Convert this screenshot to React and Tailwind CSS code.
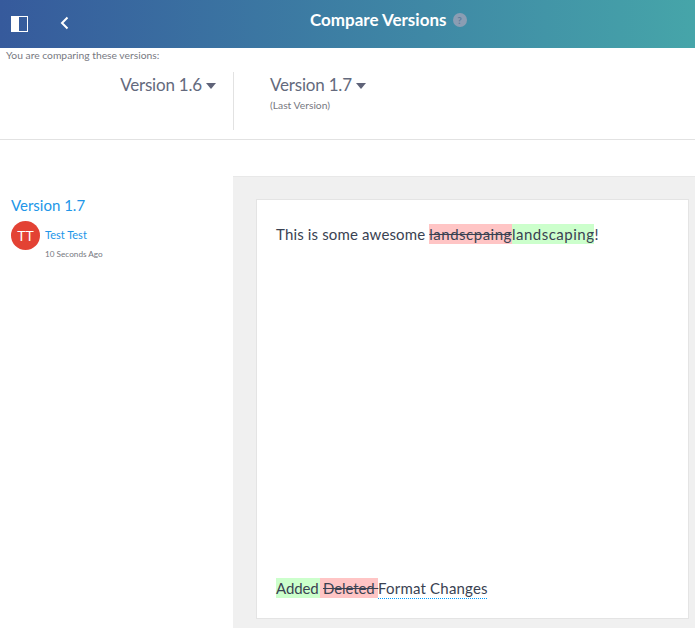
const font = { fontFamily: '"Lato", "Noto Sans", sans-serif' };

function Caret() {
  return <span className="ml-[4px] mt-[1px] inline-block h-0 w-0 border-x-[5.5px] border-t-[6px] border-x-transparent border-t-[#5f6378]" />;
}

export default function App() {
  return (
    <div className="flex h-[628px] w-[695px] flex-col overflow-hidden bg-white text-[#3a4252]" style={font}>
      {/* header */}
      <div className="relative flex h-[48px] shrink-0 items-center bg-gradient-to-r from-[#365a9c] to-[#46a5a9]">
        <div className="ml-[11px] flex h-[16px] w-[17px] border border-white">
          <div className="w-[7px] bg-white" />
        </div>
        <svg className="ml-[31px] mb-[3px]" width="11" height="14" viewBox="0 0 11 14" fill="none">
          <path d="M8.5 1.5L3 7l5.5 5.5" stroke="#fff" strokeWidth="2" />
        </svg>
        <div className="absolute left-[310px] top-[10px] flex items-center">
          <span className="text-[17px] font-bold leading-[20px] text-white">Compare Versions</span>
          <span className="ml-[6px] flex h-[14px] w-[14px] items-center justify-center rounded-full bg-[#8b9db3] text-[10px] font-bold text-[#5f7d9c]">?</span>
        </div>
      </div>

      {/* version pickers */}
      <div className="h-[92px] shrink-0 border-b border-[#e2e2e2]">
        <div className="pl-[6px] text-[10.3px] leading-[14px] text-[#77797f]">You are comparing these versions:</div>
        <div className="mt-[10px] flex">
          <div className="flex h-[58px] w-[234px] justify-end border-r border-[#e2e2e2] pr-[17px]">
            <div className="flex h-[26px] items-center text-[17px] tracking-[-0.2px] text-[#646a7d]">
              Version 1.6
              <Caret />
            </div>
          </div>
          <div className="pl-[36px]">
            <div className="flex h-[26px] items-center text-[17px] tracking-[-0.2px] text-[#646a7d]">
              Version 1.7
              <Caret />
            </div>
            <div className="text-[10.3px] leading-[14px] text-[#77797f]">(Last Version)</div>
          </div>
        </div>
      </div>

      <div className="h-[36px] shrink-0" />

      {/* body */}
      <div className="flex min-h-0 flex-1">
        <div className="w-[233px] shrink-0 pl-[11px] pt-[19px]">
          <div className="text-[15px] leading-[20px] text-[#2196e8]">Version 1.7</div>
          <div className="mt-[6px] flex">
            <div className="flex h-[29px] w-[29px] items-center justify-center rounded-full bg-[#e34234] text-[14px] text-white">TT</div>
            <div className="ml-[5px]">
              <div className="mt-[7px] text-[11px] leading-[14px] text-[#2196e8]">Test Test</div>
              <div className="mt-[6px] text-[8.2px] leading-[12px] text-[#77797f]">10 Seconds Ago</div>
            </div>
          </div>
        </div>

        <div className="flex-1 border-t border-[#e8e8e8] bg-[#f0f0f0] pb-[9px] pl-[23px] pr-[6px] pt-[22px]">
          <div className="flex h-full flex-col justify-between border border-[#e4e4e4] bg-white px-[19px] pb-[19px] pt-[24px] text-[15px] leading-[20px]">
            <div>
              <span className="tracking-[0.15px]">This is some awesome </span>
              <span className="inline-block h-[20px] bg-[#ffc5c5] tracking-[0.5px] line-through">landscpaing</span>
              <span className="inline-block h-[20px] bg-[#ccffcc] tracking-[0.5px]">landscaping</span>!
            </div>
            <div className="flex">
              <span className="h-[20px] w-[44px] whitespace-pre bg-[#ccffcc] tracking-[-0.1px]">Added </span>
              <span className="h-[20px] w-[58px] whitespace-pre bg-[#ffc5c5] pl-[3px] tracking-[-0.1px] line-through">Deleted </span>
              <div className="w-[110px]">
                <div className="h-[20px] whitespace-pre tracking-[0.2px]">Format Changes</div>
                <div className="h-[1px] bg-[repeating-linear-gradient(90deg,#009cff_0,#009cff_1px,transparent_1px,transparent_2px)]" />
              </div>
            </div>
          </div>
        </div>
      </div>
    </div>
  );
}
